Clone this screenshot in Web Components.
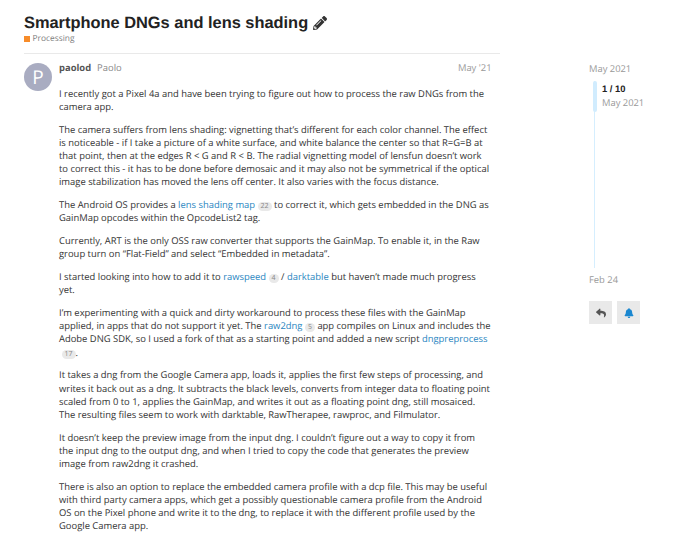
<!DOCTYPE html>
<html>
<head>
<meta charset="utf-8">
<title>Smartphone DNGs and lens shading</title>
<style>
  html, body { margin: 0; padding: 0; background: #fff; overflow: hidden; }
  body { font-family: "Open Sans", sans-serif; color: #222; text-rendering: geometricPrecision; }
</style>
</head>
<body>
<topic-page>
  <topic-header slot="header" category="Processing">Smartphone DNGs and lens shading</topic-header>
  <topic-post slot="post" username="paolod" fullname="Paolo" date="May '21">
    <p>I recently got a Pixel 4a and have been trying to figure out how to process the raw DNGs from the camera app.</p>
    <p>The camera suffers from lens shading: vignetting that’s different for each color channel. The effect is noticeable - if I take a picture of a white surface, and white balance the center so that R=G=B at that point, then at the edges R &lt; G and R &lt; B. The radial vignetting model of lensfun doesn’t work to correct this - it has to be done before demosaic and it may also not be symmetrical if the optical image stabilization has moved the lens off center. It also varies with the focus distance.</p>
    <p>The Android OS provides a <post-link count="22">lens shading map</post-link> to correct it, which gets embedded in the DNG as GainMap opcodes within the OpcodeList2 tag.</p>
    <p>Currently, ART is the only OSS raw converter that supports the GainMap. To enable it, in the Raw group turn on “Flat-Field” and select “Embedded in metadata”.</p>
    <p>I started looking into how to add it to <post-link count="4">rawspeed</post-link> / <post-link>darktable</post-link> but haven’t made much progress yet.</p>
    <p>I’m experimenting with a quick and dirty workaround to process these files with the GainMap applied, in apps that do not support it yet. The <post-link count="5">raw2dng</post-link> app compiles on Linux and includes the Adobe DNG SDK, so I used a fork of that as a starting point and added a new script <post-link count="17">dngpreprocess</post-link>.</p>
    <p>It takes a dng from the Google Camera app, loads it, applies the first few steps of processing, and writes it back out as a dng. It subtracts the black levels, converts from integer data to floating point scaled from 0 to 1, applies the GainMap, and writes it out as a floating point dng, still mosaiced. The resulting files seem to work with darktable, RawTherapee, rawproc, and Filmulator.</p>
    <p>It doesn’t keep the preview image from the input dng. I couldn’t figure out a way to copy it from the input dng to the output dng, and when I tried to copy the code that generates the preview image from raw2dng it crashed.</p>
    <p>There is also an option to replace the embedded camera profile with a dcp file. This may be useful with third party camera apps, which get a possibly questionable camera profile from the Android OS on the Pixel phone and write it to the dng, to replace it with the different profile used by the Google Camera app.</p>
  </topic-post>
  <topic-timeline slot="side" start="May 2021" pos="1 / 10" date="May 2021" end="Feb 24"></topic-timeline>
</topic-page>
<script>
class TopicPage extends HTMLElement {
  constructor() {
    super();
    this.attachShadow({ mode: "open" }).innerHTML = `
      <style>
        :host { display: block; height: 541px; overflow: hidden; }
        .wrap { display: flex; align-items: flex-start; padding: 12px 0 0 24px; }
        .main { width: 476px; flex: none; }
        .side { margin-left: 89px; margin-top: 50px; }
      </style>
      <div class="wrap">
        <div class="main">
          <slot name="header"></slot>
          <slot name="post"></slot>
        </div>
        <div class="side"><slot name="side"></slot></div>
      </div>`;
  }
}

class TopicHeader extends HTMLElement {
  constructor() {
    super();
    this.attachShadow({ mode: "open" }).innerHTML = `
      <style>
        :host { display: block; padding: 1px 0 8px; border-bottom: 1px solid #e9e9e9; }
        h1 { margin: 0; display: flex; align-items: center; gap: 5px; font: bold 16.4px/20px "Liberation Sans", Arial, sans-serif; color: #222; }
        svg { width: 14px; height: 14px; fill: #333; }
        .cat { display: flex; align-items: center; gap: 3px; margin-top: 0; font-size: 8.4px; line-height: 12px; color: #808080; }
        .box { width: 5.5px; height: 5.5px; background: #f78c2a; }
      </style>
      <h1><span><slot></slot></span>
        <svg viewBox="0 0 512 512"><path d="M497.9 142.1l-46.1 46.1c-4.7 4.7-12.3 4.7-17 0l-111-111c-4.7-4.7-4.7-12.3 0-17l46.1-46.1c18.7-18.7 49.1-18.7 67.9 0l60.1 60.1c18.8 18.7 18.8 49.1 0 67.9zM284.2 99.8L21.6 362.4.4 483.9c-2.9 16.4 11.4 30.6 27.8 27.8l121.5-21.3 262.6-262.6c4.7-4.7 4.7-12.3 0-17l-111-111c-4.8-4.7-12.4-4.7-17.1 0zM124.1 339.9c-5.5-5.5-5.5-14.3 0-19.8l154-154c5.5-5.5 14.3-5.5 19.8 0s5.5 14.3 0 19.8l-154 154c-5.5 5.5-14.3 5.5-19.8 0zM88 424h48v36.3l-64.5 11.3-31.1-31.1L51.7 376H88v48z"/></svg>
      </h1>
      <div class="cat"><span class="box"></span><span>${this.getAttribute("category")}</span></div>`;
  }
}

class TopicPost extends HTMLElement {
  constructor() {
    super();
    this.attachShadow({ mode: "open" }).innerHTML = `
      <style>
        :host { display: flex; gap: 7px; padding-top: 7px; font-size: 9.42px; line-height: 13.1px; color: #333; }
        .avatar { flex: none; width: 28px; height: 28px; margin-top: 2px; border-radius: 50%; background: #a9acc1; color: #fff; font-size: 19px; line-height: 28px; text-align: center; }
        .body { flex: 1; min-width: 0; padding-right: 8.4px; }
        .meta { display: flex; gap: 6px; margin-bottom: 13px; }
        .user { font-weight: 700; color: #555; }
        .full { color: #888; }
        .date { margin-left: auto; color: #999; }
        ::slotted(p) { margin: 0 0 9.8px; }
      </style>
      <div class="avatar">P</div>
      <div class="body">
        <div class="meta">
          <span class="user">${this.getAttribute("username")}</span>
          <span class="full">${this.getAttribute("fullname")}</span>
          <span class="date">${this.getAttribute("date")}</span>
        </div>
        <slot></slot>
      </div>`;
  }
}

class PostLink extends HTMLElement {
  constructor() {
    super();
    const count = this.getAttribute("count");
    this.attachShadow({ mode: "open" }).innerHTML = `
      <style>
        :host { display: inline; }
        .link { color: #2a86c1; }
        .count { display: inline-block; margin-left: 2.5px; padding: 0 3px; min-width: 4px; text-align: center; border-radius: 6px; background: #e9e9e9; color: #888; font-size: 7px; line-height: 9px; vertical-align: 0; }
      </style>
      <span class="link"><slot></slot></span>${count ? `<span class="count">${count}</span>` : ""}`;
  }
}

class TopicTimeline extends HTMLElement {
  constructor() {
    super();
    this.attachShadow({ mode: "open" }).innerHTML = `
      <style>
        :host { display: block; width: 80px; font-size: 9.38px; line-height: 13px; color: #999; }
        .track { margin: 6px 0 0 5px; height: 187px; border-left: 1px solid #d5eefe; position: relative; }
        .handle { position: absolute; left: -2px; top: 0; width: 3.5px; height: 31px; background: #d1ecfe; border-radius: 2px; }
        .pos { padding: 2px 0 0 7px; }
        .num { font: bold 9.38px/13px "Liberation Sans", Arial, sans-serif; color: #222; }
        .end { margin-top: 5px; }
        .btns { display: flex; gap: 5px; margin-top: 15px; }
        button { width: 23px; height: 23px; border: 0; padding: 0; background: #e9e9e9; display: flex; align-items: center; justify-content: center; }
        svg { width: 10px; height: 10px; }
      </style>
      <div>${this.getAttribute("start")}</div>
      <div class="track">
        <div class="handle"></div>
        <div class="pos"><div class="num">${this.getAttribute("pos")}</div><div>${this.getAttribute("date")}</div></div>
      </div>
      <div class="end">${this.getAttribute("end")}</div>
      <div class="btns">
        <button><svg viewBox="0 0 512 512" fill="#555"><path d="M8.3 189.8L184.3 37.8c15.4-13.3 39.7-2.5 39.7 18.2v80.1c160.6 1.8 288 34 288 186.3 0 61.5-39.6 122.4-83.4 154.2-13.7 9.9-33.1-2.5-28.1-18.8 45.4-145.2-21.5-183.7-176.5-186V360c0 20.7-24.3 31.5-39.7 18.2l-176-152c-11.1-9.6-11.1-26.8 0-36.4z"/></svg></button>
        <button><svg viewBox="0 0 448 512" fill="#1a87d0"><path d="M224 512c35.3 0 64-28.7 64-64H160c0 35.3 28.7 64 64 64zm215.4-149.7c-19.3-20.8-55.5-52-55.5-154.3 0-77.7-54.5-139.9-128-155.2V32c0-17.7-14.3-32-32-32s-32 14.3-32 32v20.8C118.4 68.1 63.9 130.3 63.9 208c0 102.3-36.2 133.5-55.5 154.3-6 6.4-8.7 14.1-8.6 21.7.1 16.4 13 32 32.1 32h383.8c19.1 0 32-15.6 32.1-32 .1-7.6-2.6-15.3-8.6-21.7z"/></svg></button>
      </div>`;
  }
}

customElements.define("topic-page", TopicPage);
customElements.define("topic-header", TopicHeader);
customElements.define("topic-post", TopicPost);
customElements.define("post-link", PostLink);
customElements.define("topic-timeline", TopicTimeline);
</script>
</body>
</html>
